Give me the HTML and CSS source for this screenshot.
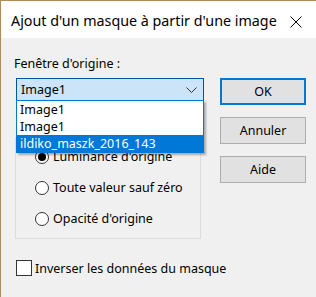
FILE: index.html
```html
<!DOCTYPE html>
<html lang="fr">
<head>
    <meta charset="UTF-8">
    <title>Ajout d'un masque</title>
    <link rel="stylesheet" href="styles.css">
</head>
<body>
<div class="window">
    <div class="titlebar">
        <span class="title">Ajout d'un masque à partir d'une image</span>
        <svg class="close" width="12" height="12" viewBox="0 0 12 12">
            <path d="M0.5 0.5 L11.5 11.5 M11.5 0.5 L0.5 11.5" stroke="#000" stroke-width="1" fill="none"/>
        </svg>
    </div>
    <div class="content">
        <div class="main">
            <div class="label">Fenêtre d'origine :</div>
            <div class="combo">
                <span class="combo-text">Image1</span>
                <svg class="chevron" width="11" height="6" viewBox="0 0 11 6">
                    <path d="M0.5 0.5 L5.5 5.5 L10.5 0.5" stroke="#333" stroke-width="1" fill="none"/>
                </svg>
                <ul class="dropdown">
                    <li>Image1</li>
                    <li>Image1</li>
                    <li class="selected">ildiko_maszk_2016_143</li>
                </ul>
            </div>
            <div class="group">
                <label class="radio"><span class="dot checked"></span>Luminance d'origine</label>
                <label class="radio"><span class="dot"></span>Toute valeur sauf zéro</label>
                <label class="radio"><span class="dot"></span>Opacité d'origine</label>
            </div>
            <label class="check"><span class="box"></span>Inverser les données du masque</label>
        </div>
        <div class="buttons">
            <div class="btn default">OK</div>
            <div class="btn">Annuler</div>
            <div class="btn">Aide</div>
        </div>
    </div>
</div>
</body>
</html>
```

FILE: styles.css
```css
* {
    margin: 0;
    padding: 0;
    box-sizing: border-box;
    font-family: 'Noto Sans', 'Open Sans', sans-serif;
}

body {
    background: #f0f0f0;
    font-size: 12.5px;
    color: #000;
}

.window {
    width: 316px;
    height: 297px;
    border-top: 1px solid #b08a5a;
    border-left: 1px solid #b08a5a;
    background: #f0f0f0;
    overflow: hidden;
}

.titlebar {
    height: 37px;
    background: #fff;
    display: flex;
    align-items: center;
    padding: 0 14px 0 10px;
}

.title {
    font-size: 14.3px;
    padding-top: 2px;
    white-space: nowrap;
}

.close {
    margin: 4px 0 0 auto;
}

.content {
    display: flex;
    padding: 17px 0 0 15px;
}

.main {
    width: 188px;
    flex-shrink: 0;
}

.label {
    height: 17px;
    line-height: 17px;
    margin-left: -2px;
}

.combo {
    position: relative;
    margin-top: 6px;
    height: 23px;
    border: 1px solid #005499;
    background: #cce4f7;
    display: flex;
    align-items: center;
    justify-content: space-between;
    padding: 0 6px 0 4px;
}

.chevron {
    margin-top: 1px;
}

.dropdown {
    position: absolute;
    top: 21px;
    left: -1px;
    right: -1px;
    list-style: none;
    background: #fff;
    border: 1px solid #0078d7;
    box-shadow: 2px 2px 2px rgba(0, 0, 0, 0.3);
    z-index: 10;
}

.dropdown li {
    height: 17px;
    line-height: 17px;
    padding-left: 3px;
}

.dropdown li.selected {
    background: #0078d7;
    color: #fff;
}

.group {
    margin: 36px 0 0 -1px;
    width: 186px;
    height: 102px;
    border: 1px solid #dcdcdc;
    display: flex;
    flex-direction: column;
    justify-content: flex-end;
    gap: 16px;
    padding: 0 0 12px 19px;
}

.radio {
    display: flex;
    align-items: center;
    gap: 4px;
    height: 15px;
}

.dot {
    flex-shrink: 0;
    width: 14px;
    height: 14px;
    border: 1px solid #333;
    border-radius: 50%;
    background: #fff;
    display: flex;
    align-items: center;
    justify-content: center;
}

.dot.checked::after {
    content: '';
    width: 8px;
    height: 8px;
    border-radius: 50%;
    background: #000;
}

.check {
    display: flex;
    align-items: center;
    gap: 3px;
    width: max-content;
    margin-top: 21px;
    height: 16px;
    white-space: nowrap;
}

.box {
    flex-shrink: 0;
    width: 16px;
    height: 16px;
    border: 1px solid #333;
    background: #fff;
}

.buttons {
    margin: 23px 0 0 16px;
    display: flex;
    flex-direction: column;
    gap: 12px;
}

.btn {
    width: 86px;
    height: 27px;
    border: 1px solid #adadad;
    background: #e1e1e1;
    display: flex;
    align-items: center;
    justify-content: center;
}

.btn.default {
    border: 2px solid #0078d7;
}
```
